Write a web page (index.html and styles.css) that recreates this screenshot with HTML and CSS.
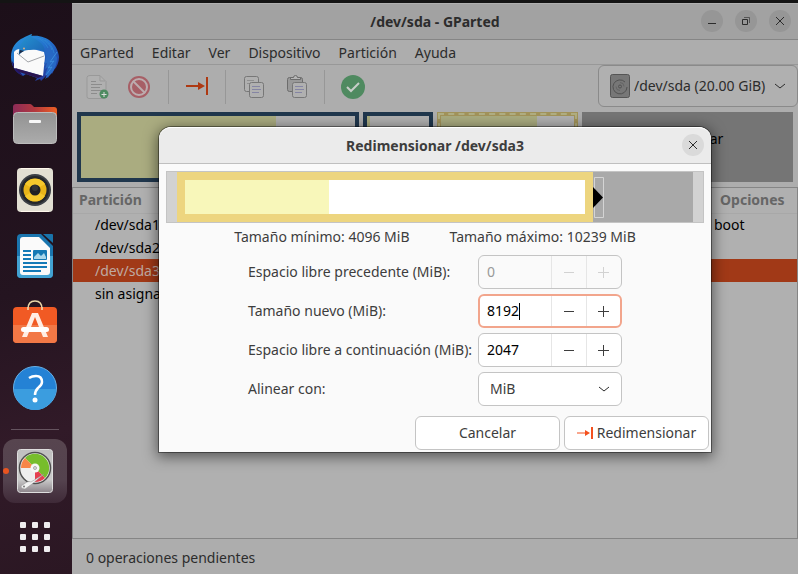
FILE: index.html
```html
<!DOCTYPE html>
<html lang="es">
<head>
<meta charset="utf-8">
<title>/dev/sda - GParted</title>
<link rel="stylesheet" href="styles.css">
</head>
<body>
<div class="desktop">
  <nav class="dock" aria-label="Dock">
    <a class="dock-item" href="#" aria-label="Thunderbird">
      <svg width="48" height="48" viewBox="0 0 48 48">
        <defs>
          <linearGradient id="bird" x1="0" y1="0" x2=".6" y2="1"><stop offset="0" stop-color="#2798dc"/><stop offset=".5" stop-color="#2470cc"/><stop offset="1" stop-color="#243a9c"/></linearGradient>
          <linearGradient id="head" x1="0" y1="0" x2="1" y2="1"><stop offset="0" stop-color="#2596d2"/><stop offset="1" stop-color="#1c62b4"/></linearGradient>
        </defs>
        <path d="M12 42C4 38 0 31 0 23 0 14 5 7 12 4c3-2 6-3 9-4l-1 2c15-2 27 8 28 21 0 5-2 10-5 13l-2 4-1-2-3 6-2-2-5 5-1-2-5 2 2-3-11-4z" fill="url(#bird)"/>
        <path d="M1 27c0 7 5 13 11 15l-6-8z" fill="#241a6c"/>
        <path d="M3 18q2-3 6-3h13l11 3 1 5-2 19L3 34z" fill="#fafafa"/>
        <path d="M4 34 32 42l-5 2L8 38z" fill="#2a1550"/>
        <path d="m6 19 11 9 16-6" fill="none" stroke="#a3a5a9" stroke-width="1"/>
        <path d="M8 21C7 12 12 5 21 0c-2 3 1 4 5 6 5 3 8 7 8 12-3-3-9-3-15-2-5 0-8 1-11 5z" fill="url(#head)"/>
        <path d="M33 16q3 5 2 9l-2 5 3-1-2 6 3-2-3 8 3-2-3 6c7-4 12-12 12-21L40 9z" fill="#2768c4"/>
        <path d="m46 18-7 10 4-1-6 7 4-1-6 8" fill="none" stroke="#3b8cdb" stroke-width="1"/>
        <path d="M22 3c7 1 12 5 15 11M28 4c6 2 11 6 13 12M34 6c5 3 8 8 9 13" fill="none" stroke="#2f8ad6" stroke-width=".7"/>
        <path d="m8 20 1-4 4 1z" fill="#1b2c4a"/><circle cx="13" cy="14.500" r="1" fill="#d9b08a"/>
      </svg>
    </a>
    <a class="dock-item" href="#" aria-label="Archivos">
      <svg width="46" height="46" viewBox="0 0 46 46">
        <defs>
          <linearGradient id="tab" x1="0" x2="1"><stop offset="0" stop-color="#8c2b58"/><stop offset=".5" stop-color="#b3393e"/><stop offset="1" stop-color="#ee6024"/></linearGradient>
          <linearGradient id="folder" x1="0" y1="0" x2="0" y2="1"><stop offset="0" stop-color="#929292"/><stop offset="1" stop-color="#acacac"/></linearGradient>
        </defs>
        <path d="M1 15V6q0-3 3-3h14q1 0 2 1l2 2h20q3 0 3 3v7z" fill="url(#tab)"/>
        <rect x="1.500" y="11.500" width="43" height="31" rx="4" fill="url(#folder)" stroke="#bcbcbc"/>
        <rect x="17" y="19" width="12" height="3" rx="1" fill="#f7f7f7"/>
      </svg>
    </a>
    <a class="dock-item" href="#" aria-label="Rhythmbox">
      <svg width="38" height="46" viewBox="0 0 38 46">
        <rect x="1" y="1" width="36" height="44" rx="4" fill="#e2dfd3"/><path d="M5 1.500h28M5 44.500h28" stroke="#fff8ec"/>
        <circle cx="19" cy="23" r="16" fill="#3c4046"/><circle cx="19" cy="23" r="14" fill="#24272b"/>
        <circle cx="19" cy="23" r="11.500" fill="#e9b518"/><path d="M9 17a12 12 0 0 1 20 0l-10 6zM9 29a12 12 0 0 0 20 0l-10-6z" fill="#f5c82c"/>
        <circle cx="19" cy="23" r="5.500" fill="#202124"/><circle cx="19" cy="21" r="3" fill="#333436"/>
      </svg>
    </a>
    <a class="dock-item" href="#" aria-label="LibreOffice Writer">
      <svg width="38" height="46" viewBox="0 0 38 46">
        <path d="M5 1h20l12 12v28q0 4-4 4H5q-4 0-4-4V5q0-4 4-4z" fill="#1a75ae"/><path d="M1 23h36v18q0 4-4 4H5q-4 0-4-4z" fill="#42a2d2"/>
        <path d="M27 1h9q1 0 1 1v8z" fill="#1974ab"/>
        <path d="M7 4h16l11 11v24q0 3-3 3H7q-3 0-3-3V7q0-3 3-3z" fill="#fafafa"/>
        <path d="M7 18h8M7 22h8M7 26h8M7 30h24M7 34h24M7 38h18" stroke="#147ab7" stroke-width="2"/>
        <rect x="17" y="17" width="14" height="10" rx="1" fill="#1479b4"/><path d="M18 26v-2l4-4 3 3 3-3 2 4v2z" fill="#a9d7eb"/>
      </svg>
    </a>
    <a class="dock-item" href="#" aria-label="Ubuntu Software">
      <svg width="46" height="46" viewBox="0 0 46 46">
        <path d="M16 10q0-8 7-8t7 8" fill="none" stroke="#e9d7a9" stroke-width="1.500"/>
        <rect x="1" y="8" width="44" height="36" rx="4" fill="#f15a24"/><path d="M1 26h44v14q0 4-4 4H5q-4 0-4-4z" fill="#f27846"/>
        <path d="M16 8v3M30 8v3" stroke="#f5dfb2" stroke-width="1.500"/>
        <path d="M20 14h6l10 24h-5l-8-20-8 20h-5z" fill="#ffeee5"/><rect x="9" y="28" width="28" height="5" rx="2.500" fill="#fff"/>
      </svg>
    </a>
    <a class="dock-item" href="#" aria-label="Ayuda">
      <svg width="46" height="46" viewBox="0 0 46 46">
        <circle cx="23" cy="23" r="21.500" fill="#2482d5" stroke="#66b1e8"/><path d="M2 24h42a21 21 0 0 1-42 0z" fill="#3b9ddf"/>
        <path d="M17 13q3-2 7-2 6 0 6 6 0 3-4 6-3 3-3 7" fill="none" stroke="#fff" stroke-width="2.500"/><circle cx="23" cy="35" r="2.500" fill="#fff"/>
      </svg>
    </a>
    <hr class="dock-line">
    <a class="dock-item dock-active" href="#" aria-label="GParted">
      <svg width="38" height="46" viewBox="0 0 38 46">
        <defs><linearGradient id="disk" x1="0" y1="0" x2="0" y2="1"><stop offset="0" stop-color="#c0c0c0"/><stop offset=".7" stop-color="#cacaca"/><stop offset="1" stop-color="#8d858b"/></linearGradient></defs>
        <rect x="1.500" y="1.500" width="35" height="43" rx="3" fill="url(#disk)" stroke="#dedede"/>
        <circle cx="19" cy="20" r="15.500" fill="#eee" stroke="#505050" stroke-width="1.500"/>
        <path d="M19 20 9 10a14 14 0 0 1 20 20z" fill="#77bd2c"/><path d="M19 20H5q0-6 4-10z" fill="#f78548"/><path d="m19 20 10 10q-4 4-10 4z" fill="#e54050"/>
        <circle cx="19" cy="20" r="4.500" fill="#f6f6f6"/><circle cx="19" cy="20" r="1.500" fill="#ddd" stroke="#aaa"/>
        <path d="m28 26-13 8q-2-1-4 0l-6 4q0 3 4 3l7-5 12-10z" fill="#f1f1f1" stroke="#929292" stroke-width=".5"/><circle cx="8" cy="38.500" r="1" fill="#777"/>
      </svg>
    </a>
    <a class="dock-item" href="#" aria-label="Mostrar aplicaciones">
      <svg width="30" height="30" viewBox="0 0 30 30" fill="#efedef">
        <rect width="6" height="6" rx="1"/><rect x="12" width="6" height="6" rx="1"/><rect x="24" width="6" height="6" rx="1"/>
        <rect y="12" width="6" height="6" rx="1"/><rect x="12" y="12" width="6" height="6" rx="1"/><rect x="24" y="12" width="6" height="6" rx="1"/>
        <rect y="24" width="6" height="6" rx="1"/><rect x="12" y="24" width="6" height="6" rx="1"/><rect x="24" y="24" width="6" height="6" rx="1"/>
      </svg>
    </a>
  </nav>

  <main class="window">
    <header class="titlebar">
      <h1>/dev/sda - GParted</h1>
      <div class="window-buttons">
        <button aria-label="Minimizar"><svg width="10" height="10" viewBox="0 0 10 10"><path d="M1 7.500h8"/></svg></button>
        <button aria-label="Restaurar"><svg width="10" height="10" viewBox="0 0 10 10"><path d="M1.500 3.500h5v5h-5z"/><path d="M3 1.500h5.500V7" stroke-opacity=".6"/></svg></button>
        <button aria-label="Cerrar"><svg width="10" height="10" viewBox="0 0 10 10"><path d="m1 1 8 8M9 1 1 9"/></svg></button>
      </div>
    </header>
    <nav class="menubar"><a href="#">GParted</a><a href="#">Editar</a><a href="#">Ver</a><a href="#">Dispositivo</a><a href="#">Partición</a><a href="#">Ayuda</a></nav>
    <div class="toolbar">
      <div class="tool-group">
        <button aria-label="Nueva"><svg width="24" height="24" viewBox="0 0 24 24" fill="none"><path d="M4 .5h10l6 6v15q0 2-2 2H3q-2 0-2-2v-19q0-2 3-2z" fill="#b0b0b0" stroke="#999"/><path d="M14 1v5h5" stroke="#999"/><path d="M5 6.500h5M5 9.500h11M5 12.500h9M5 15.500h11M5 18.500h6" stroke="#8c8c8c"/><circle cx="18" cy="19" r="4.500" fill="#4e8a60"/><path d="M15.500 19.500h5M18 17v5" stroke="#ddd"/></svg></button>
        <button aria-label="Borrar"><svg width="24" height="24" viewBox="0 0 24 24"><circle cx="11" cy="12" r="11" fill="#a75f66"/><circle cx="11" cy="12" r="8" fill="none" stroke="#bcacae" stroke-width="2"/><path d="m5 6 12 12" stroke="#bcacae" stroke-width="2"/></svg></button>
      </div>
      <div class="tool-group">
        <button aria-label="Redimensionar"><svg width="24" height="24" viewBox="0 0 24 24" fill="#ae3912"><path d="M1 10h12V7l7 4-7 4v-3H1zM21 2h2v18h-2z"/></svg></button>
      </div>
      <div class="tool-group">
        <button aria-label="Copiar"><svg width="24" height="24" viewBox="0 0 24 24" fill="#b0b0b0" stroke="#777"><rect x="2.500" y="1.500" width="14" height="15" rx="2"/><path d="M5 5.500h7M5 8.500h5" stroke="#909090"/><rect x="7.500" y="7.500" width="14" height="15" rx="2"/><path d="M10 11.500h8M10 14.500h9M10 17.500h7" stroke="#8585a4"/></svg></button>
        <button aria-label="Pegar"><svg width="24" height="24" viewBox="0 0 24 24" fill="#999" stroke="#6c6c6c"><rect x="3.500" y="2.500" width="15" height="14" rx="2"/><path d="M6.500 4.500v-2h3q0-2 2-2t2 2h3v2z" fill="#b5b5b5"/><rect x="8.500" y="7.500" width="14" height="15" rx="2" fill="#b0b0b0" stroke="#777"/><path d="M11 11.500h8M11 14.500h9M11 17.500h7" stroke="#8585a4"/></svg></button>
      </div>
      <div class="tool-group">
        <button aria-label="Aplicar"><svg width="24" height="24" viewBox="0 0 24 24"><circle cx="12" cy="12" r="12" fill="#4f8a60"/><path d="m6 12 4 4 8-8" fill="none" stroke="#c8cec9" stroke-width="2"/></svg></button>
      </div>
      <div class="device">
        <svg class="device-icon" width="20" height="24" viewBox="0 0 20 24" fill="none"><rect x=".5" y=".5" width="19" height="23" rx="2" fill="#777" stroke="#555"/><path d="M15 8a7 7 0 1 0 2 5" stroke="#525252"/><circle cx="10" cy="12.500" r="1.500" stroke="#525252"/><path d="M6 12.500a4 4 0 0 0 4 4m0-8a4 4 0 0 1 4 4" stroke="#646464"/></svg>
        <select aria-label="Dispositivo"><option>/dev/sda (20.00 GiB)</option></select>
        <svg class="chevron" width="12" height="12" viewBox="0 0 12 12"><path d="m1 4 5 4 5-4"/></svg>
      </div>
    </div>
    <section class="disk-map" aria-label="Particiones">
      <div class="part part-first"><div class="used"></div></div>
      <div class="part part-second"><div class="used"></div></div>
      <div class="part part-third"><div class="used"></div></div>
      <div class="part-free"><p>sin asignar<br>2.00 GiB</p></div>
    </section>
    <section class="list">
      <table>
        <thead><tr><th>Partición</th><th class="options">Opciones</th></tr></thead>
        <tbody>
          <tr><td>/dev/sda1</td><td class="options">boot</td></tr>
          <tr><td>/dev/sda2</td><td></td></tr>
          <tr class="selected"><td>/dev/sda3</td><td></td></tr>
          <tr><td>sin asignar</td><td></td></tr>
        </tbody>
      </table>
    </section>
    <footer class="status">0 operaciones pendientes</footer>

    <div class="overlay">
      <form class="dialog" role="dialog" aria-labelledby="dialog-title">
        <header class="dialog-head">
          <h2 id="dialog-title">Redimensionar /dev/sda3</h2>
          <button class="close" type="button" aria-label="Cerrar"><svg width="10" height="10" viewBox="0 0 10 10"><path d="m1 1 8 8M9 1 1 9"/></svg></button>
        </header>
        <div class="resizer">
          <div class="resizer-part"><div class="resizer-used"></div></div>
          <div class="resizer-free">
            <svg class="handle" width="12" height="42" viewBox="0 0 12 42"><path d="M1.500.5h9v40h-9z" fill="none" stroke="#d4d4d4"/><path d="m0 10 10 10.500L0 31z"/></svg>
          </div>
        </div>
        <div class="limits"><span>Tamaño mínimo: 4096 MiB</span><span>Tamaño máximo: 10239 MiB</span></div>
        <div class="fields">
          <label for="before">Espacio libre precedente (MiB):</label>
          <div class="spin spin-off"><input id="before" value="0" disabled><button type="button" disabled aria-label="Disminuir"><svg width="12" height="12" viewBox="0 0 12 12"><path d="M1 6.500h10"/></svg></button><button type="button" disabled aria-label="Aumentar"><svg width="12" height="12" viewBox="0 0 12 12"><path d="M0 6.500h11M5.500 1v11"/></svg></button></div>
          <label for="size">Tamaño nuevo (MiB):</label>
          <div class="spin spin-focus"><input id="size" value="8192"><button type="button" aria-label="Disminuir"><svg width="12" height="12" viewBox="0 0 12 12"><path d="M1 6.500h10"/></svg></button><button type="button" aria-label="Aumentar"><svg width="12" height="12" viewBox="0 0 12 12"><path d="M0 6.500h11M5.500 1v11"/></svg></button></div>
          <label for="after">Espacio libre a continuación (MiB):</label>
          <div class="spin"><input id="after" value="2047"><button type="button" aria-label="Disminuir"><svg width="12" height="12" viewBox="0 0 12 12"><path d="M1 6.500h10"/></svg></button><button type="button" aria-label="Aumentar"><svg width="12" height="12" viewBox="0 0 12 12"><path d="M0 6.500h11M5.500 1v11"/></svg></button></div>
          <label for="align">Alinear con:</label>
          <div class="combo"><select id="align"><option>MiB</option></select><svg class="chevron" width="12" height="12" viewBox="0 0 12 12"><path d="m1 4 5 4 5-4"/></svg></div>
        </div>
        <div class="actions">
          <button type="button">Cancelar</button>
          <button type="button"><svg width="16" height="16" viewBox="0 0 16 16" fill="#f4511e"><path d="M0 7.500h8V5l5 3-5 3V8.500H0zM14 2h2v12h-2z"/></svg>Redimensionar</button>
        </div>
      </form>
    </div>
  </main>
</div>
</body>
</html>
```
FILE: styles.css
```css
* { box-sizing: border-box; }
body { margin: 0; font: 14px/20px "Noto Sans", "Open Sans", sans-serif; color: #2c2c2c; }
a { color: inherit; text-decoration: none; }
button, input, select { font: inherit; color: inherit; margin: 0; padding: 0; border: 0; background: none; outline: 0; }
select { appearance: none; width: 100%; }
h1, h2, p { margin: 0; }
h1, h2 { font-size: 14px; line-height: 20px; font-weight: 700; }
svg { display: block; flex: none; }

.desktop { display: flex; min-height: 100vh; border-top: 3px solid #141414; background: #241420; }

.dock { display: flex; flex-direction: column; align-items: center; gap: 2px; width: 72px; flex: none; padding: 23px 2px 5px 0; background: linear-gradient(165deg, #1c0f19 0%, #241420 50%, #311a28 75%, #2b1723 100%); }
.dock-item { display: flex; align-items: center; justify-content: center; width: 64px; height: 64px; border-radius: 12px; }
.dock-line { width: 48px; height: 1px; margin: 7px 0; border: 0; background: #65545f; }
.dock-active { position: relative; background: linear-gradient(#57454f, #54424e 65%, #3f2a38); }
.dock-active::before { content: ""; position: absolute; left: 0; top: 29px; width: 6px; height: 6px; border-radius: 3px; background: #e95420; }

.window { position: relative; display: flex; flex-direction: column; flex: 1; min-width: 0; background: #adadad; }
.titlebar { position: relative; display: flex; align-items: center; justify-content: center; height: 37px; border-top: 1px solid #b0b0b0; border-bottom: 1px solid #858585; background: #a2a2a2; }
.window-buttons { position: absolute; right: 7px; top: 6px; display: flex; gap: 12px; }
.window-buttons button, .close { display: flex; align-items: center; justify-content: center; width: 22px; height: 22px; border-radius: 50%; background: #969696; }
.window-buttons path, .close path { fill: none; stroke: #2c2c2c; }

.menubar { display: flex; align-items: center; gap: 18px; height: 25px; padding: 2px 8px 0; border-bottom: 1px solid #989898; }
.toolbar { display: flex; height: 43px; align-items: center; padding-left: 2px; }
.tool-group { display: flex; gap: 18px; height: 34px; align-items: center; padding: 0 16px; }
.tool-group:first-child { padding-left: 12px; }
.tool-group + .tool-group { border-left: 1px solid #979797; }
.device { position: relative; display: flex; align-self: flex-start; width: 200px; height: 42px; margin-left: auto; border: 1px solid #8a8a8a; border-radius: 6px; background: #b0b0b0; }
.device select { padding: 0 24px 0 35px; }
.device-icon { position: absolute; left: 11px; top: 8px; }
.chevron { position: absolute; right: 11px; top: calc(50% - 6px); pointer-events: none; }
.chevron path { fill: none; stroke: #2c2c2c; }

.disk-map { display: grid; grid-template-columns: 282fr 70fr 141fr 211fr; gap: 4px; height: 70px; margin: 4px 5px 5px; }
.part { border: 4px solid #20374d; background: #b0b0b0; }
.used { height: 100%; background: #aaac80; }
.part-first .used { width: 71%; }
.part-second .used { width: 5%; }
.part-third .used { width: 72%; }
.part-third { border-color: #a2935a; outline: 2px dashed #b0ae82; outline-offset: -3px; }
.part-free { display: flex; align-items: center; justify-content: center; background: #757575; color: #000; line-height: 17px; }

.list { flex: 1; border: 1px solid #858585; background: #b0b0b0; color: #000; }
table { width: 100%; border-collapse: collapse; table-layout: fixed; }
th, td { height: 23px; padding: 0 0 0 22px; text-align: left; line-height: 20px; }
th { height: 25px; padding-left: 6px; border-bottom: 1px solid #a8a8a8; color: #666; }
.options { width: 85px; padding-left: 2px; }
th.options { padding-left: 8px; }
.selected { background: #a13917; color: #bfaaa2; }
.status { height: 35px; padding: 9px 14px 6px; }

.overlay { position: absolute; inset: 2px 0 0; display: flex; align-items: center; justify-content: center; }
.dialog { width: 80%; max-width: 552px; border-radius: 12px 12px 0 0; background: #fafafa; color: #3d3d3d; box-shadow: 0 0 0 1px rgba(0,0,0,.4), 0 3px 14px 2px rgba(0,0,0,.5); }
.dialog-head { position: relative; display: flex; align-items: center; justify-content: center; height: 37px; border-top: 1px solid #fff; border-bottom: 1px solid #bfbfbf; border-radius: 12px 12px 0 0; background: #ebebeb; }
.close { position: absolute; right: 7px; top: 6px; background: #dadada; }
.resizer { display: grid; grid-template-columns: 416fr 100fr; height: 52px; margin: 7px 7px 4px; padding: 0 10px; border: 1px solid #c4c4c4; background: #d2d2d2; }
.resizer-part { padding: 8px; background: linear-gradient(#fff, #fff) content-box, #edd57f; }
.resizer-used { width: 36%; height: 100%; background: #f8f7ba; }
.resizer-free { position: relative; background: #a9a9a9; }
.handle { position: absolute; left: 0; top: 5px; }
.limits { display: flex; justify-content: center; gap: 40px; height: 20px; }
.fields { display: grid; grid-template-columns: 230px 144px; gap: 5px 0; justify-content: center; align-items: center; margin-top: 8px; }
.fields label { white-space: nowrap; }
.spin, .combo, .actions button { height: 34px; border: 1px solid #c4c4c4; border-radius: 6px; background: #fff; }
.spin { position: relative; display: flex; overflow: hidden; color: #000; }
.spin input { flex: 1; min-width: 0; padding-left: 8px; }
.spin button { display: flex; align-items: center; justify-content: center; width: 35px; border-left: 1px solid #e6e6e6; }
.spin path { fill: none; stroke: #3d3d3d; }
.spin-off { background: #fafafa; color: #999; }
.spin-off path { stroke: #d2d2d2; }
.spin-focus { border: 2px solid #f2a58c; }
.spin-focus input { padding-left: 7px; }
.spin-focus button:last-child { width: 34px; padding-left: 1px; }
.spin-focus::after { content: ""; position: absolute; left: 39px; top: 7px; width: 1px; height: 17px; background: #000; }
.combo { position: relative; display: flex; }
.combo select { padding-left: 11px; }
.actions { display: flex; justify-content: flex-end; gap: 4px; padding: 10px 2px 2px; }
.actions button { display: flex; align-items: center; justify-content: center; gap: 4px; width: 145px; }
```
